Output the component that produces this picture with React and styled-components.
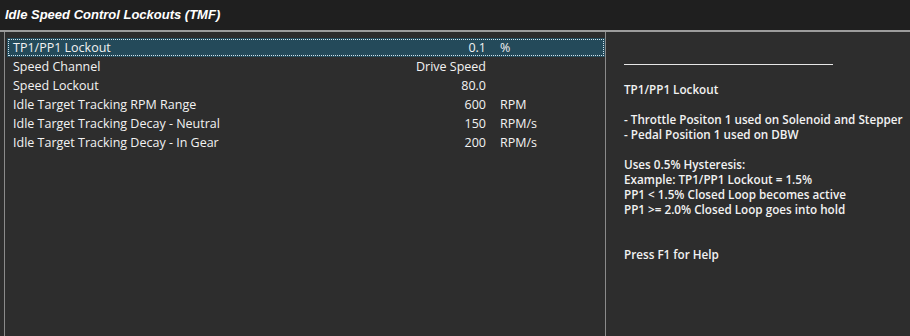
import React from 'react';
import styled, { createGlobalStyle } from 'styled-components';

const GlobalStyle = createGlobalStyle`
  html, body {
    margin: 0;
    padding: 0;
    background: #2d2d2d;
  }
  body {
    width: 910px;
    height: 336px;
    overflow: hidden;
    font-family: 'Segoe UI', 'Open Sans', 'Noto Sans', sans-serif;
    font-size: 12.5px;
    color: #f2f2f2;
  }
`;

const Window = styled.div`
  display: flex;
  flex-direction: column;
  width: 910px;
  height: 336px;
  background: #2d2d2d;
`;

const TitleBar = styled.div`
  display: flex;
  align-items: center;
  height: 32px;
  padding-left: 5px;
  background: #1f1f1f;
  border-bottom: 2px solid #9c9c9c;
  box-sizing: border-box;
`;

const Title = styled.h1`
  margin: -2px 0 0 0;
  font-family: 'Liberation Sans', Arial, sans-serif;
  font-size: 13px;
  font-weight: bold;
  font-style: italic;
  color: #ffffff;
`;

const Body = styled.div`
  flex: 1;
  display: flex;
`;

const Grid = styled.div`
  width: 598px;
  margin-left: 4px;
  border-left: 1px solid #8a8a8a;
  border-right: 1px solid #8a8a8a;
  padding: 6px 0 0 2px;
`;

const Row = styled.div`
  display: grid;
  grid-template-columns: 1fr 150px 105px;
  align-items: center;
  height: 19px;
  padding-left: 6px;
  box-sizing: border-box;
  background: ${(p) => (p.$selected ? '#244a5a' : 'transparent')};
  outline: ${(p) => (p.$selected ? '1px dotted #cfe3ee' : 'none')};
  outline-offset: -2px;
`;

const Name = styled.span`
  white-space: nowrap;
`;

const Value = styled.span`
  text-align: right;
  padding-right: 14px;
  white-space: nowrap;
`;

const Unit = styled.span`
  white-space: nowrap;
`;

const Help = styled.div`
  flex: 1;
  padding: 32px 0 0 18px;
  font-size: 11.7px;
  font-weight: 600;
  line-height: 15px;
`;

const Rule = styled.div`
  width: 209px;
  border-top: 1px solid #e6e6e6;
  margin-bottom: 17px;
`;

const Line = styled.div`
  height: 15px;
  white-space: nowrap;
`;

const rows = [
  { name: 'TP1/PP1 Lockout', value: '0.1', unit: '%', selected: true },
  { name: 'Speed Channel', value: 'Drive Speed', unit: '' },
  { name: 'Speed Lockout', value: '80.0', unit: '' },
  { name: 'Idle Target Tracking RPM Range', value: '600', unit: 'RPM' },
  { name: 'Idle Target Tracking Decay - Neutral', value: '150', unit: 'RPM/s' },
  { name: 'Idle Target Tracking Decay - In Gear', value: '200', unit: 'RPM/s' },
];

const helpLines = [
  'TP1/PP1 Lockout',
  '',
  '- Throttle Positon 1 used on Solenoid and Stepper',
  '- Pedal Position 1 used on DBW',
  '',
  'Uses 0.5% Hysteresis:',
  'Example: TP1/PP1 Lockout = 1.5%',
  'PP1 < 1.5% Closed Loop becomes active',
  'PP1 >= 2.0% Closed Loop goes into hold',
  '',
  '',
  'Press F1 for Help',
];

const App = () => {
  return (
    <Window>
      <GlobalStyle />
      <TitleBar>
        <Title>Idle Speed Control Lockouts (TMF)</Title>
      </TitleBar>
      <Body>
        <Grid>
          {rows.map((row, index) => (
            <Row key={index} $selected={row.selected}>
              <Name>{row.name}</Name>
              <Value>{row.value}</Value>
              <Unit>{row.unit}</Unit>
            </Row>
          ))}
        </Grid>
        <Help>
          <Rule />
          {helpLines.map((line, index) => (
            <Line key={index}>{line}</Line>
          ))}
        </Help>
      </Body>
    </Window>
  );
};

export default App;
